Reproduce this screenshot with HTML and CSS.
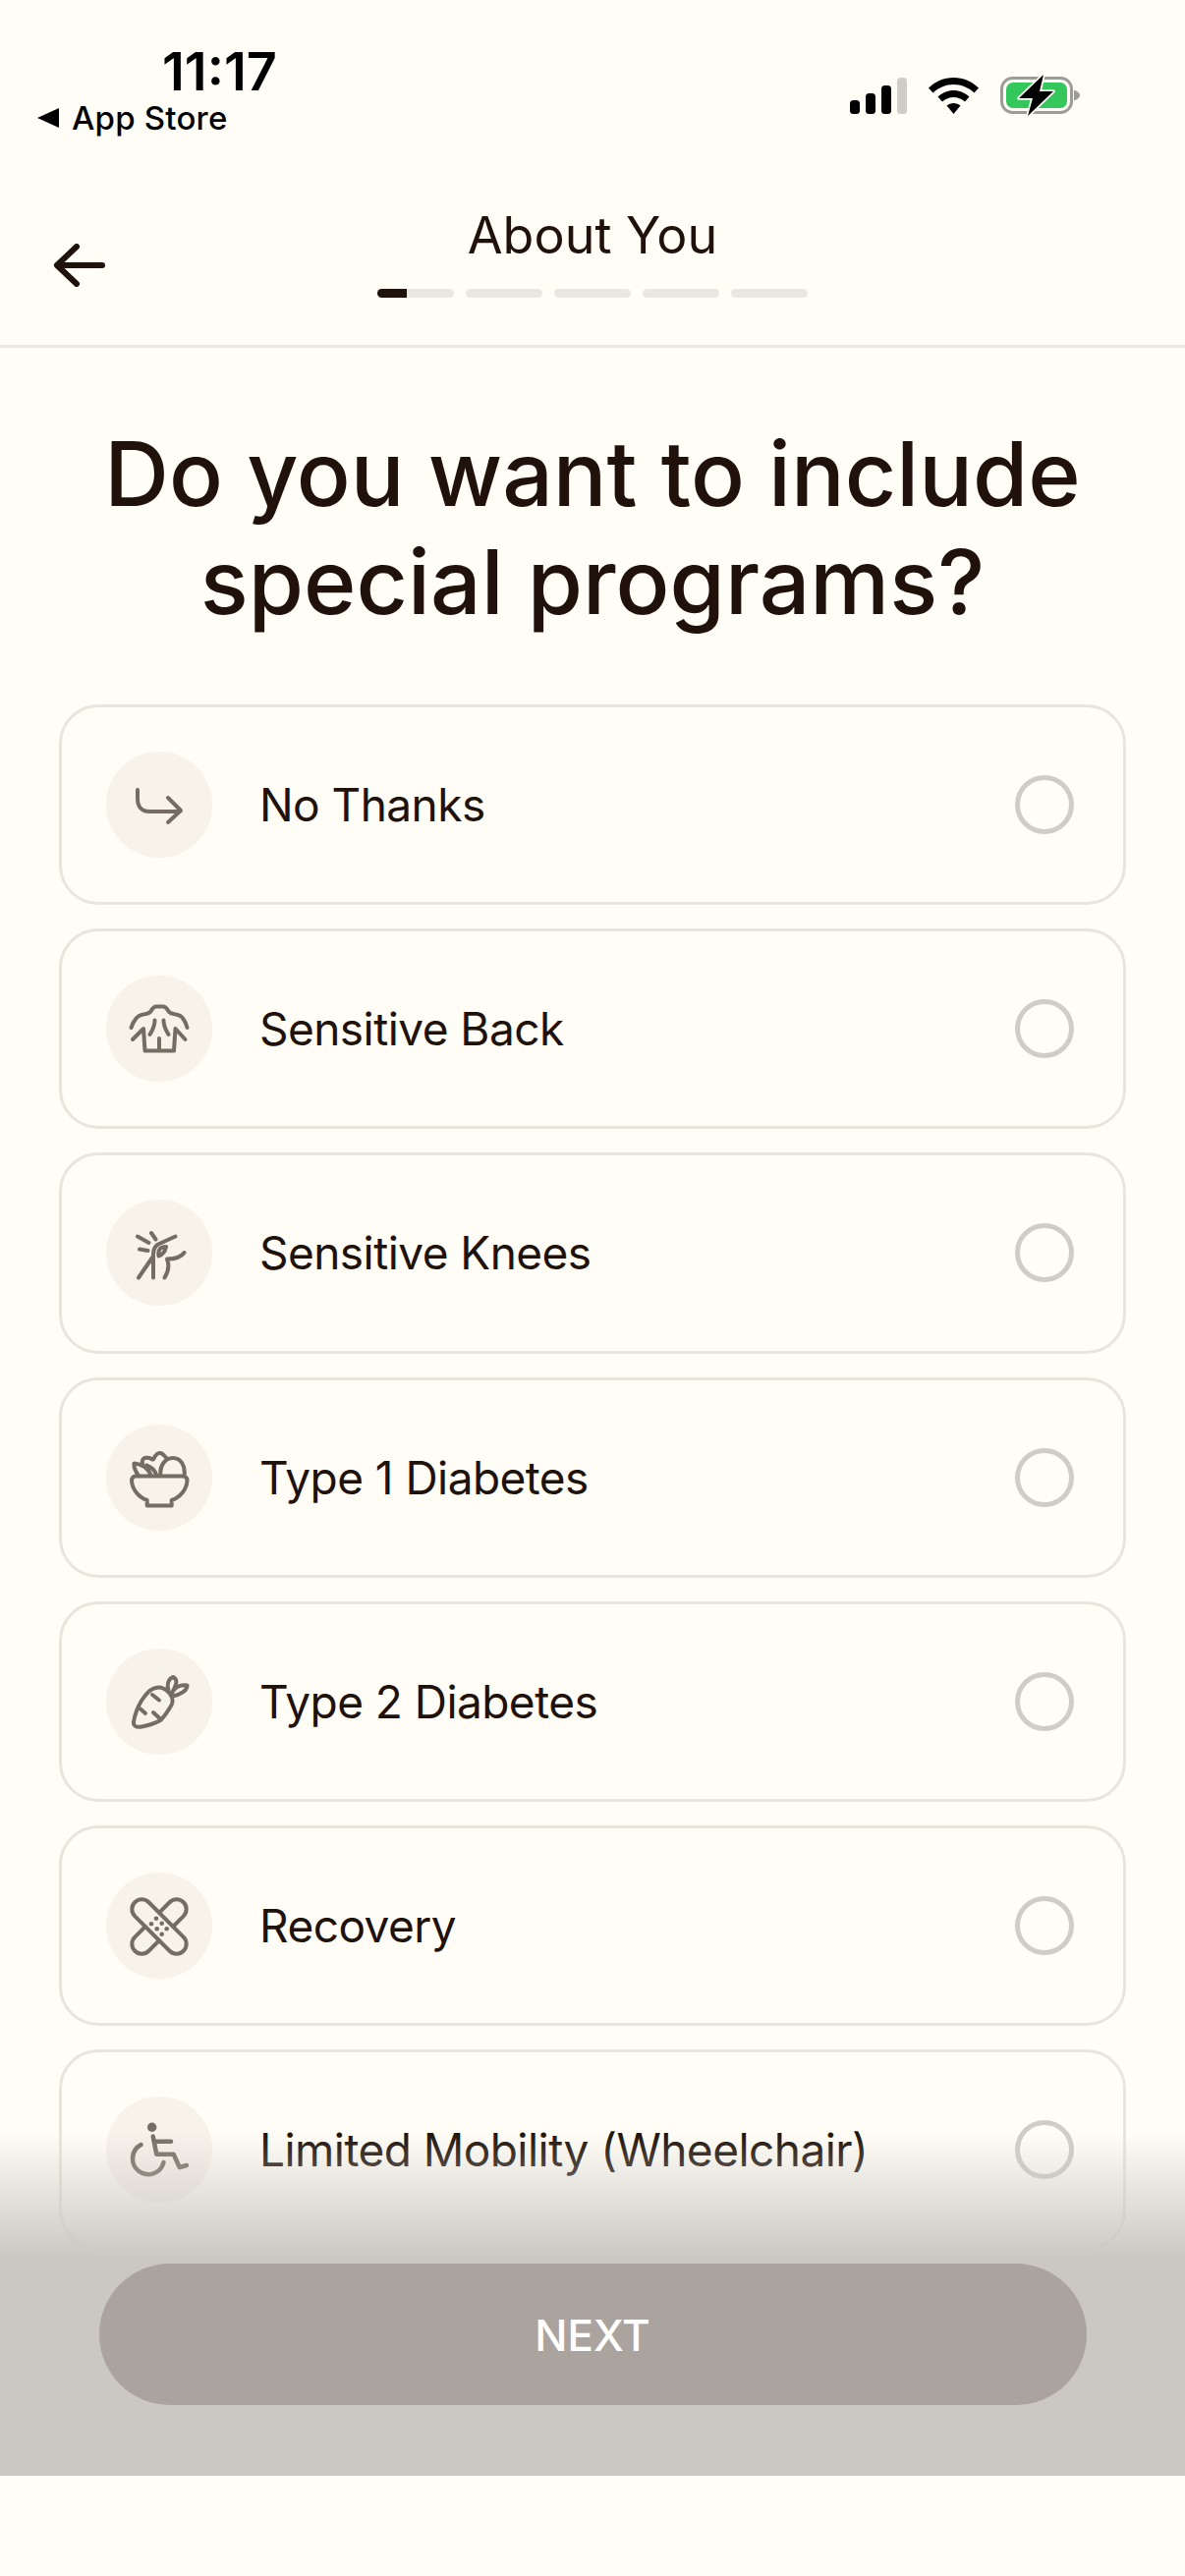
FILE: index.html
```html
<!DOCTYPE html>
<html lang="en">
<head>
    <meta charset="UTF-8">
    <meta name="viewport" content="width=device-width, initial-scale=1.0">
    <title>About You</title>
    <link rel="stylesheet" href="styles.css">
</head>
<body>
    <div class="statusbar">
        <div class="status-left">
            <div class="time">11:17</div>
            <div class="back-app"><span class="back-tri"></span>App Store</div>
        </div>
        <div class="status-right">
            <svg class="sig" width="58" height="37" viewBox="0 0 58 37">
                <rect x="0" y="23" width="10" height="14" rx="3.5" fill="#000"/>
                <rect x="16" y="16" width="10" height="21" rx="3.5" fill="#000"/>
                <rect x="32" y="8" width="10" height="29" rx="3.5" fill="#000"/>
                <rect x="48" y="0" width="10" height="37" rx="3.5" fill="#cfccc7"/>
            </svg>
            <svg class="wifi" width="51" height="37" viewBox="0 0 51 37">
                <path d="M25.5 0C15.500 0 7 4 0 10.500L4.500 15.500C10.500 10 17.500 7 25.500 7C33.500 7 40.500 10 46.500 15.500L51 10.500C44 4 35.500 0 25.500 0Z" fill="#000"/>
                <path d="M25.500 13C19.500 13 14 15.500 9.500 19.500L14 24.500C17.500 21.500 21 20 25.500 20C30 20 33.500 21.500 37 24.500L41.500 19.500C37 15.500 31.500 13 25.500 13Z" fill="#000"/>
                <path d="M25.500 26C23 26 20.500 27 18.500 28.500L25.500 37L32.500 28.500C30.500 27 28 26 25.500 26Z" fill="#000"/>
            </svg>
            <svg class="batt" width="84" height="44" viewBox="0 0 84 44">
                <rect x="1.500" y="4.500" width="71" height="35" rx="11" fill="none" stroke="#9c9c9a" stroke-width="3"/>
                <rect x="6" y="9" width="62" height="26" rx="7" fill="#34c75b"/>
                <path d="M75 16.500C78 17.500 81 19.500 81 22C81 24.500 78 26.500 75 27.500Z" fill="#9c9c9a"/>
                <path d="M44 1L19 25H33L28 43L54 18H40Z" fill="#000" stroke="#fffdf6" stroke-width="3.500" stroke-linejoin="round" paint-order="stroke"/>
            </svg>
        </div>
    </div>

    <div class="topbar">
        <button class="back-btn">
            <svg width="54" height="44" viewBox="0 0 54 44" fill="none" stroke="#1e120a" stroke-width="6" stroke-linecap="round" stroke-linejoin="round">
                <path d="M50 22H4M24 3L4 22L24 41"/>
            </svg>
        </button>
        <div class="topbar-title">About You</div>
        <div class="progress">
            <div class="seg seg-on"></div>
            <div class="seg"></div>
            <div class="seg"></div>
            <div class="seg"></div>
            <div class="seg"></div>
        </div>
    </div>

    <h1 class="question">Do you want to include special programs?</h1>

    <div class="options">
        <div class="option">
            <div class="opt-icon">
                <svg viewBox="0 0 108 108"><path d="M32 39V48C32 56 36 61 44 61H75M63 47L76 60L63 72"/></svg>
            </div>
            <div class="opt-label">No Thanks</div>
            <div class="radio"></div>
        </div>
        <div class="option">
            <div class="opt-icon">
                <svg viewBox="0 0 108 108"><path d="M25.500 53C28 46 31 41 36 40C40 39 43 39 45 37C47 34 48 31.500 51 31.500H58C61 31.500 62 34 64 37C66 39 69 39 73 40C78 41 80.500 46 82.500 53M27 65L38 54L39.500 76.500H69L70.500 54L80.500 65M54 64V76.500M44.500 60C47 56 49.500 51 49.500 45.500M63.500 60C61 56 58.500 51 58.500 45.500"/></svg>
            </div>
            <div class="opt-label">Sensitive Back</div>
            <div class="radio"></div>
        </div>
        <div class="option">
            <div class="opt-icon">
                <svg viewBox="0 0 108 108"><path d="M70.500 37.500L53 45.500C49.500 47.500 48 51 48 56V79.500M47 59L33 79.500M61 48C56 48 52.500 50 53.500 57.500C57.500 56 60 53 61 48ZM79.500 54C76 59 70 60.500 62 60.500C64.500 67 63 74 59.500 79.500M32 37.500L43.500 44M46 34L50.500 40.500M34 50.500L42.500 52"/></svg>
            </div>
            <div class="opt-label">Sensitive Knees</div>
            <div class="radio"></div>
        </div>
        <div class="option">
            <div class="opt-icon">
                <svg viewBox="0 0 108 108"><path d="M30 52.500H78.500C81 52.500 82.500 54.500 82.500 57C82 66 75.500 74 66.700 77V82.500H41.700V77C33 74 26.500 66 26 57C26 54.500 27.500 52.500 30 52.500ZM55.500 52C54 42 60 34 68 34C76 34 81 42 79.500 52M33 52C29.500 47 28 43 28.500 39.500C36 40 42.500 44.500 46 52M37 39.500C36 35 39 33 44 34C46 34.500 47 36 48 35.500C50 31 53 28.500 55.500 29C58 29.500 59 32 62 34.500M51.500 52C50 47 45.500 43 41 41.500"/></svg>
            </div>
            <div class="opt-label">Type 1 Diabetes</div>
            <div class="radio"></div>
        </div>
        <div class="option">
            <div class="opt-icon">
                <svg viewBox="0 0 108 108"><path d="M35 79.700C30 80.500 27.500 78 28 74.500C29.500 66 33 58 36 53C40 47 43 43 47 41.300C51 39.300 55 39 58 40.500C62 42.500 65.500 46 67 49.700C68 53 67.500 57 65 60C62 65 59 69.500 55.300 73C50 76 42 78.500 35 79.700ZM63.500 43C61.500 37 63 31 68 29C71 30 72 33 71 36.500C70 39.500 69 42 67 45M67 45.500C69 41 73 38 77 37.500C79.500 37 82.500 37 82.500 37.500C82.500 40 80.500 43 77 45C74.500 46.500 72 47.500 69.500 48M47 47L54 52.500M35 61.500L40 66M48 65L54.500 71"/></svg>
            </div>
            <div class="opt-label">Type 2 Diabetes</div>
            <div class="radio"></div>
        </div>
        <div class="option">
            <div class="opt-icon">
                <svg viewBox="0 0 108 108"><rect x="19" y="45" width="70" height="20" rx="10" transform="rotate(45 54 55)"/><path transform="rotate(-45 54 55)" d="M64 45H79A10 10 0 0 1 79 65H64M44 45H29A10 10 0 0 0 29 65H44"/><g class="dots"><circle cx="51" cy="46.700" r="2.300"/><circle cx="56.700" cy="51.700" r="2.300"/><circle cx="46" cy="52.300" r="2.300"/><circle cx="61.700" cy="57.300" r="2.300"/><circle cx="51.700" cy="57.300" r="2.300"/><circle cx="56.700" cy="62.700" r="2.300"/></g></svg>
            </div>
            <div class="opt-label">Recovery</div>
            <div class="radio"></div>
        </div>
        <div class="option">
            <div class="opt-icon">
                <svg viewBox="0 0 108 108"><circle class="dots" cx="46.700" cy="31.300" r="4.700"/><path class="wheel-thick" d="M47.700 40.500L51.300 58.700H68.700L74.700 72L82 70M48.700 45.700H66M35.500 49A16 16 0 1 0 58.500 67"/></svg>
            </div>
            <div class="opt-label">Limited Mobility (Wheelchair)</div>
            <div class="radio"></div>
        </div>
    </div>

    <div class="bottom-fade">
        <button class="next-btn">NEXT</button>
    </div>
</body>
</html>
```

FILE: styles.css
```css
* {
    box-sizing: border-box;
}
body {
    font-family: Inter, "Liberation Sans", sans-serif;
    background-color: #fffdf6;
    color: #20120a;
    margin: 0;
    height: 2622px;
    overflow: hidden;
    position: relative;
}
.statusbar {
    height: 132px;
    display: flex;
    justify-content: space-between;
    padding: 0 104px 0 38px;
}
.status-left {
    padding-top: 46px;
}
.time {
    font-size: 54px;
    font-weight: 600;
    line-height: 54px;
    color: #000;
    padding-left: 127px;
}
.back-app {
    display: flex;
    align-items: center;
    font-size: 33px;
    font-weight: 500;
    line-height: 40px;
    color: #000;
    letter-spacing: 0.2px;
}
.back-tri {
    width: 0;
    height: 0;
    border-top: 10px solid transparent;
    border-bottom: 10px solid transparent;
    border-right: 22px solid #000;
    margin-right: 13px;
}
.status-right {
    display: flex;
    align-items: flex-start;
    padding-top: 75px;
}
.sig {
    margin-top: 4px;
    margin-right: 22px;
}
.wifi {
    margin-top: 4px;
    margin-right: 22px;
}
.topbar {
    height: 222px;
    border-bottom: 3px solid #ebe8e2;
    position: relative;
    display: flex;
    flex-direction: column;
    align-items: center;
    padding-top: 77px;
}
.back-btn {
    position: absolute;
    left: 54px;
    top: 116px;
    border: none;
    background: none;
    padding: 0;
    display: flex;
}
.topbar-title {
    font-size: 52px;
    font-weight: 420;
    line-height: 62px;
}
.progress {
    display: flex;
    gap: 12px;
    margin-top: 23px;
}
.seg {
    width: 78px;
    height: 9px;
    border-radius: 5px;
    background-color: #eae7e2;
}
.seg-on {
    background: linear-gradient(90deg, #1e120a 30px, #eae7e2 30px);
}
.question {
    font-size: 91px;
    font-weight: 500;
    line-height: 110px;
    text-align: center;
    margin: 73px 90px 0;
    color: #20120a;
}
.options {
    display: flex;
    flex-direction: column;
    gap: 24px;
    padding: 0 60px;
    margin-top: 70px;
}
.option {
    height: 204.2px;
    border: 3px solid #e8e6dc;
    border-radius: 40px;
    display: flex;
    align-items: center;
    padding: 0 50px 0 45px;
}
.opt-icon {
    width: 108px;
    height: 108px;
    border-radius: 50%;
    background-color: #f7f2ea;
    flex-shrink: 0;
}
.opt-icon svg {
    display: block;
    width: 108px;
    height: 108px;
    fill: none;
    stroke: #756d63;
    stroke-width: 4;
    stroke-linecap: round;
    stroke-linejoin: round;
}
.opt-icon .dots {
    fill: #756d63;
    stroke: none;
}
.opt-icon .wheel-thick {
    stroke-width: 4.5;
}
.opt-label {
    flex: 1;
    margin-left: 48px;
    font-size: 46px;
    font-weight: 430;
    line-height: 56px;
    letter-spacing: -0.55px;
}
.radio {
    width: 60px;
    height: 60px;
    border-radius: 50%;
    border: 5.5px solid #d0cdc7;
}
.bottom-fade {
    position: absolute;
    left: 0;
    right: 0;
    top: 2170px;
    height: 350px;
    background: linear-gradient(180deg, rgba(203, 200, 195, 0) 0, #cbc8c3 128px);
    padding-top: 134px;
    display: flex;
    justify-content: center;
    align-items: flex-start;
}
.next-btn {
    width: 1005px;
    height: 144px;
    border: none;
    border-radius: 72px;
    background-color: #aba39d;
    color: #fff;
    font-family: Inter, "Liberation Sans", sans-serif;
    font-size: 44px;
    font-weight: 500;
    padding-top: 3px;
}
```
